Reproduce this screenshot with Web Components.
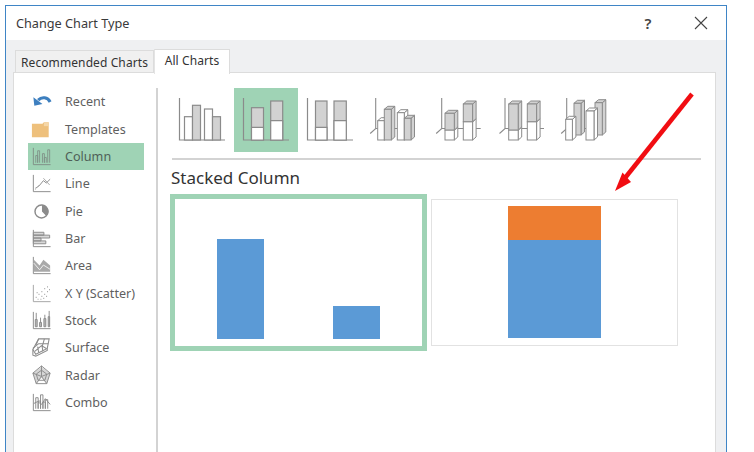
<!DOCTYPE html>
<html lang="en">

<head>
  <meta charset="UTF-8">
  <title>Change Chart Type</title>
  <style>
    html, body { margin: 0; height: 452px; overflow: hidden; background: #fff; }
    body { font-family: "Noto Sans", "Open Sans", sans-serif; }
  </style>
</head>

<body>

  <chart-dialog>
    <span slot="title">Change Chart Type</span>

    <dialog-tab slot="tabs" style="--tab-w:139px">Recommended Charts</dialog-tab>
    <dialog-tab slot="tabs" active style="--tab-w:76px">All Charts</dialog-tab>

    <side-item slot="side" icon="recent">Recent</side-item>
    <side-item slot="side" icon="templates">Templates</side-item>
    <side-item slot="side" icon="column" selected>Column</side-item>
    <side-item slot="side" icon="line">Line</side-item>
    <side-item slot="side" icon="pie">Pie</side-item>
    <side-item slot="side" icon="bar">Bar</side-item>
    <side-item slot="side" icon="area">Area</side-item>
    <side-item slot="side" icon="scatter">X Y (Scatter)</side-item>
    <side-item slot="side" icon="stock">Stock</side-item>
    <side-item slot="side" icon="surface">Surface</side-item>
    <side-item slot="side" icon="radar">Radar</side-item>
    <side-item slot="side" icon="combo">Combo</side-item>

    <type-button slot="types" icon="t1"></type-button>
    <type-button slot="types" icon="t2" selected></type-button>
    <type-button slot="types" icon="t3"></type-button>
    <type-button slot="types" icon="t4"></type-button>
    <type-button slot="types" icon="t5"></type-button>
    <type-button slot="types" icon="t6"></type-button>
    <type-button slot="types" icon="t7"></type-button>

    <span slot="heading">Stacked Column</span>

    <chart-preview slot="previews" selected>
      <chart-bar style="--w:47px;--h:99.5px;--c:#5b9ad6"></chart-bar>
      <chart-bar style="--w:47px;--h:33px;--c:#5b9ad6"></chart-bar>
    </chart-preview>
    <chart-preview slot="previews">
      <chart-stack>
        <chart-bar style="--w:92.5px;--h:33.5px;--c:#ed7d31"></chart-bar>
        <chart-bar style="--w:92.5px;--h:98.5px;--c:#5b9ad6"></chart-bar>
      </chart-stack>
    </chart-preview>
  </chart-dialog>

  <script>

    // small icon drawings, coordinates are real pixels inside a 24x24 box
    const G = '#8b8b8b';
    const sideIcons = {
      recent: `<path d="M21 12.500C18.500 7.500 12.500 6.500 8.500 10.500" fill="none" stroke="#3d7fbf" stroke-width="3.200"/><path d="M3.500 7.500 L4.500 16.500 L13 14.500 Z" fill="#3d7fbf"/>`,
      templates: `<path d="M2 6h11l1.500 -1.500h5v15.500h-17.500z" fill="#eec07c"/><path d="M14.500 4.500h5v4h-5z" fill="#f5d7a8"/>`,
      column: `<g fill="none" stroke="#7f8f86"><path d="M3.500 3v17.500h18"/><path d="M6 18.500V11h2v7.500M8 18.500V6h2v12.500M13 18.500V9h2v9.500M15 18.500V13h2v5.500M18.500 18.500V5h2v13.500" stroke-width=".9"/></g>`,
      line: `<g fill="none" stroke="${G}"><path d="M3.500 3v17.500h18"/><path d="M5.500 17l4-2.500 4.500-5.500 3 2.500 4-4"/><path d="M14 6.500l6.500 7" stroke="#a8a8a8"/><path d="M5.500 18.500l4-5" stroke="#bbb" stroke-dasharray="1.500 1"/></g>`,
      pie: `<circle cx="12" cy="12" r="6.800" fill="#fff" stroke="${G}" stroke-width="1.500"/><path d="M12.500 12V5a6.800 6.800 0 0 1 4.500 11.800z" fill="${G}"/>`,
      bar: `<g fill="#d8d8d8" stroke="${G}"><path d="M3.500 3v17.500h18" fill="none"/><path d="M3.500 5.500h11v3h-11zM3.500 8.500h17v3h-17zM3.500 11.500h8v3h-8zM3.500 14.500h13v3h-13z"/></g>`,
      area: `<path d="M3.500 3v17.500h18" fill="none" stroke="${G}"/><path d="M4 18.500V6l6 6 4-6 7 6v6.500z" fill="#a9a9a9"/><path d="M4 9.500l6 7 4-5 7 4.500" fill="none" stroke="#efefef"/>`,
      scatter: `<path d="M3.500 3v17.500h18" fill="none" stroke="#a5a5a5"/><path d="M6 16h.8M9 13h.8M8 18h.8M12 10h.8M12 15h.8M15 7h.8M15 13h.8M18 5h.8M18 10h.8M11 18h.8M14 17h.8M17 15h.8M7 11h.8M20 8h.8" stroke="#8e8e8e" stroke-width="1.300"/>`,
      stock: `<g fill="none" stroke="${G}"><path d="M3.500 3v17.500h18"/><path d="M6.500 4v14M11 9v9M15.500 6v12M20 2v16"/><path d="M5.500 11h2v7.500h-2zM10 14h2v4.500h-2zM14.500 10h2v8.500h-2zM19 8h1.500v10.500H19z" fill="#bbb"/></g>`,
      surface: `<g fill="#fff" stroke="${G}" stroke-width="1.100"><path d="M9 3h11l-2 10-12 6-3-5z"/><path d="M3 13l6-5h10M5 16l7-6 5 3M9 3L6.500 9M15 3l-2 7M12.500 10l1 6M8 11l1 6"  fill="none"/><path d="M3 14v6l3 1 12-6v-2" fill="none"/></g>`,
      radar: `<path d="M12 3l9 6.500-3.500 11L12 14l-5.500 6.500L3 9.500z" fill="#c4c4c4" opacity=".7"/><g fill="none" stroke="${G}"><path d="M12 2l9 7.500-3.500 11h-11L3 9.500z"/><path d="M12 6.500l5.500 4-2 6.500h-7l-2-6.500z"/><path d="M12 2v11M21 9.500l-9 3.500M17.500 20.500L12 13M6.500 20.500L12 13M3 9.500l9 3.500"/></g>`,
      combo: `<g fill="none" stroke="${G}"><path d="M3.500 3v17.500h18"/><path d="M6 18.500V7h2.500v11.500M11 18.500V4h2.500v14.500M16 18.500V9h2.500v9.500"/><path d="M4 13l4-2 4 3 4-6 5 6"/><path d="M8.500 18.500v-8h2.500v8M13.500 18.500v-7H16v7"/></g>`
    };

    // flat 2d type icon, numbers come off the reference in button coordinates
    function flat(bars) {
      return `<path d="M9.500 10v42h45.500" fill="none" stroke="${G}" stroke-width="1.200"/>` + bars.map(b =>
        `<rect x="${b[0]}" y="${b[1]}" width="${b[2]}" height="${52 - b[1]}" fill="${b[3]}" stroke="${G}" stroke-width="1.200"/>` +
        (b[4] ? `<path d="M${b[0]} ${b[4]}h${b[2]}V52h${-b[2]}z" fill="#fff" stroke="${G}" stroke-width="1.200"/>` : '')
      ).join('');
    }

    // one 3d column: front face, side face, top face
    function box(x, top, w, bottom, fill) {
      const d = 3.5, up = 3;
      return `<g stroke="${G}" stroke-width="1" fill="${fill}">
        <path d="M${x + w} ${top}l${d} ${-up}V${bottom - up}l${-d} ${up}z"/>
        <path d="M${x} ${top}l${d} ${-up}h${w}l${-d} ${up}z"/>
        <rect x="${x}" y="${top}" width="${w}" height="${bottom - top}"/></g>`;
    }
    function axes3d(x) {
      return `<path d="M${x} 10v30.500M${x - 5.500} 45.500L${x} 40.500H${x + 39}" fill="none" stroke="${G}" stroke-width="1.100"/>`;
    }
    // white part first, the gray part sits on it and hides its top face
    function stacked3d(x, top, split, w) {
      return box(x, split, w, 52, '#fff') + box(x, top, w, split, '#d2d2d2');
    }

    const typeIcons = {
      t1: flat([[14.500, 28.700, 8, '#fff'], [22.500, 17.300, 8, '#d2d2d2'], [34.500, 21, 8, '#fff'], [42.500, 28.700, 8, '#d2d2d2']]),
      t2: flat([[17.500, 19.700, 12, '#d2d2d2', 39.300], [36.700, 13, 12, '#d2d2d2', 32.700]]),
      t3: flat([[17.500, 13, 11.500, '#d2d2d2', 39.300], [36, 13, 12.300, '#d2d2d2', 32.700]]),
      t4: axes3d(13.700) + box(15.700, 32.700, 6.700, 52, '#fff') + box(22.300, 21.300, 7, 52, '#d2d2d2') + box(35.300, 24.700, 7, 52, '#fff') + box(42.300, 30.300, 6.700, 52, '#d2d2d2'),
      t5: axes3d(15.700) + stacked3d(19, 25.300, 42, 9.300) + stacked3d(37.300, 16, 33.700, 9.300),
      t6: axes3d(15) + stacked3d(18.700, 16, 42, 9.500) + stacked3d(37.300, 16, 33.700, 9.300),
      t7: axes3d(12.700) + box(20, 15.300, 7, 47, '#d2d2d2') + box(41, 14.700, 7.300, 47, '#d2d2d2') + box(11.700, 31.300, 6.700, 52, '#fff') + box(32, 23, 8, 52, '#fff')
    };


    class ChartDialog extends HTMLElement {
      connectedCallback() {
        this.attachShadow({ mode: 'open' });
        this.shadowRoot.innerHTML = `
        <style>
          :host { display: block; position: relative; height: 452px; padding: 5px 0 0 5px; box-sizing: border-box; }
          .win { width: 722px; height: 460px; box-sizing: border-box; border: 1px solid #3f85c6; display: flex; flex-direction: column; background: #eff0f2; }
          .head { height: 34px; flex: none; background: #fff; display: flex; align-items: center; padding: 0 18px 0 10px; font-size: 12.700px; color: #3a3a3a; }
          .head .t { flex: 1; }
          .help { width: 12px; margin-right: 40px; font-size: 15px; font-weight: 600; color: #444; text-align: center; }
          .head svg { display: block; }
          .tabs { display: flex; align-items: flex-end; height: 33px; flex: none; padding-left: 9px; }
          .panel { flex: 1; margin: 0 10px 0 7px; background: #fff; border: 1px solid #dcdcdc; border-bottom: 0; display: flex; margin-top: -1px; }
          .side { width: 144px; margin-top: 15px; border-right: 2px solid #d3d3d3; padding-left: 14px; box-sizing: border-box; flex: none; }
          .main { flex: 1; padding: 15px 14px 0 12px; }
          .types { display: flex; height: 64px; }
          .rule { height: 2px; margin: 6px 0 0 2px; background: #d3d3d3; }
          .heading { font-size: 17px; color: #333; line-height: 24px; margin: 6px 0 0 1px; height: 24px; }
          .previews { display: flex; align-items: center; gap: 4px; margin-top: 4px; }
          .arrow { position: absolute; left: 600px; top: 80px; }
        </style>
        <div class="win">
          <div class="head">
            <span class="t"><slot name="title"></slot></span>
            <span class="help">?</span>
            <svg width="14" height="14" viewBox="0 0 14 14"><path d="M1 1l12 12M13 1L1 13" stroke="#444" stroke-width="1.100"/></svg>
          </div>
          <div class="tabs"><slot name="tabs"></slot></div>
          <div class="panel">
            <div class="side"><slot name="side"></slot></div>
            <div class="main">
              <div class="types"><slot name="types"></slot></div>
              <div class="rule"></div>
              <div class="heading"><slot name="heading"></slot></div>
              <div class="previews"><slot name="previews"></slot></div>
            </div>
          </div>
        </div>
        <svg class="arrow" width="110" height="120" viewBox="600 80 110 120">
          <path d="M692 94L623 180.500" stroke="#f10d12" stroke-width="4.500"/>
          <path d="M615 191L622.500 172.500L631 182z" fill="#f10d12"/>
        </svg>`;
      }
    }
    customElements.define('chart-dialog', ChartDialog);


    class DialogTab extends HTMLElement {
      connectedCallback() {
        this.attachShadow({ mode: 'open' });
        this.shadowRoot.innerHTML = `
        <style>
          :host { display: flex; align-items: center; justify-content: center; box-sizing: border-box; width: var(--tab-w); height: 23px; padding-top: 1px; font-size: 12px; letter-spacing: .1px; color: #333; background: #f0f0f0; border: 1px solid #dcdcdc; border-bottom: 0; }
          :host([active]) { height: 25px; background: #fff; position: relative; z-index: 1; padding: 0 0 3px; margin-bottom: -1px; border-left-color: #e4e4e4; }
        </style>
        <slot></slot>`;
      }
    }
    customElements.define('dialog-tab', DialogTab);


    class SideItem extends HTMLElement {
      connectedCallback() {
        this.attachShadow({ mode: 'open' });
        this.shadowRoot.innerHTML = `
        <style>
          :host { display: flex; align-items: center; width: 116px; height: 27.360px; font-size: 12.600px; color: #5f5f5f; padding-left: 2px; box-sizing: border-box; }
          :host([selected]) { background: #9fd3b5; color: #4f5f57; }
          svg { flex: none; margin-right: 12px; }
        </style>
        <svg width="23" height="23" viewBox="0 0 24 24">${sideIcons[this.getAttribute('icon')]}</svg>
        <slot></slot>`;
      }
    }
    customElements.define('side-item', SideItem);


    class TypeButton extends HTMLElement {
      connectedCallback() {
        this.attachShadow({ mode: 'open' });
        this.shadowRoot.innerHTML = `
        <style>
          :host { display: block; width: 64px; height: 64px; flex: none; }
          :host([selected]) { background: #9fd3b5; }
          svg { display: block; }
        </style>
        <svg width="64" height="64" viewBox="0 0 64 64">${typeIcons[this.getAttribute('icon')]}</svg>`;
      }
    }
    customElements.define('type-button', TypeButton);


    class ChartPreview extends HTMLElement {
      connectedCallback() {
        this.attachShadow({ mode: 'open' });
        this.shadowRoot.innerHTML = `
        <style>
          :host { display: flex; align-items: flex-end; justify-content: center; box-sizing: border-box; flex: none; width: 247px; height: 147px; border: 1px solid #e2e2e2; padding-bottom: 7px; }
          :host([selected]) { width: 257px; height: 157px; border: 5px solid #9fd3b5; justify-content: flex-start; padding: 0 0 7.500px 42px; gap: 69px; }
        </style>
        <slot></slot>`;
      }
    }
    customElements.define('chart-preview', ChartPreview);


    class ChartStack extends HTMLElement {
      connectedCallback() {
        this.attachShadow({ mode: 'open' });
        this.shadowRoot.innerHTML = `<style>:host { display: flex; flex-direction: column; }</style><slot></slot>`;
      }
    }
    customElements.define('chart-stack', ChartStack);


    class ChartBar extends HTMLElement {
      connectedCallback() {
        this.attachShadow({ mode: 'open' });
        this.shadowRoot.innerHTML = `<style>:host { display: block; flex: none; width: var(--w); height: var(--h); background: var(--c); }</style>`;
      }
    }
    customElements.define('chart-bar', ChartBar);

  </script>

</body>

</html>
